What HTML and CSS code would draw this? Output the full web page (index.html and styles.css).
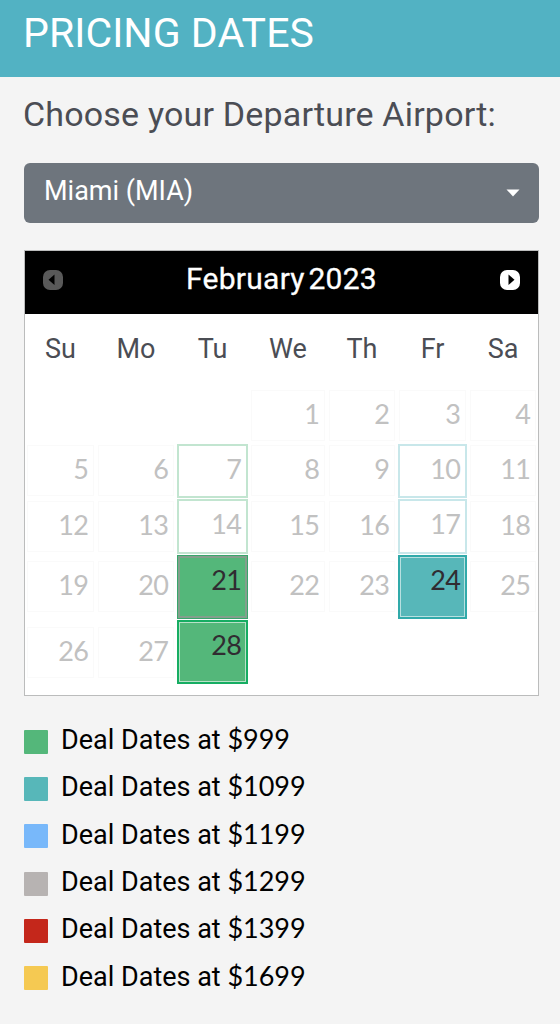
FILE: index.html
```html
<!DOCTYPE html>
<html lang="en">
<head>
    <meta charset="UTF-8">
    <meta name="viewport" content="width=device-width, initial-scale=1.0">
    <title>Pricing Dates</title>
    <link rel="stylesheet" href="styles.css">
</head>
<body>
    <header class="header"><h1>PRICING DATES</h1></header>
    <main class="content">
        <h2 class="choose">Choose your Departure Airport:</h2>
        <button class="airport">
            <span class="airport-name">Miami (MIA)</span>
            <svg width="14" height="8" viewBox="0 0 14 8"><path d="M0.5 0.5h13L7 7.5z" fill="#fff"/></svg>
        </button>

        <div class="calendar">
            <div class="cal-header">
                <svg class="arrow" width="20" height="20" viewBox="0 0 20 20"><rect width="20" height="20" rx="7" fill="#595959"/><path d="M11.5 4.5v10.5L5.5 9.8z" fill="#000"/></svg>
                <span class="month">February <span class="year">2023</span></span>
                <svg class="arrow" width="20" height="20" viewBox="0 0 20 20"><rect width="20" height="20" rx="7" fill="#fff"/><path d="M8.5 4.5v10.5L14.5 9.8z" fill="#000"/></svg>
            </div>
            <div class="week">
                <span>Su</span><span>Mo</span><span>Tu</span><span>We</span><span>Th</span><span>Fr</span><span>Sa</span>
            </div>
            <div class="days">
                <div class="day first">1</div>
                <div class="day">2</div>
                <div class="day">3</div>
                <div class="day">4</div>

                <div class="day">5</div>
                <div class="day">6</div>
                <div class="day past-green">7</div>
                <div class="day">8</div>
                <div class="day">9</div>
                <div class="day past-teal">10</div>
                <div class="day">11</div>

                <div class="day">12</div>
                <div class="day">13</div>
                <div class="day past-green">14</div>
                <div class="day">15</div>
                <div class="day">16</div>
                <div class="day past-teal">17</div>
                <div class="day">18</div>

                <div class="day">19</div>
                <div class="day">20</div>
                <div class="day deal green today">21</div>
                <div class="day">22</div>
                <div class="day">23</div>
                <div class="day deal teal">24</div>
                <div class="day">25</div>

                <div class="day">26</div>
                <div class="day">27</div>
                <div class="day deal green">28</div>
            </div>
        </div>

        <ul class="legend">
            <li><i class="box green"></i><span>Deal Dates at <b>$999</b></span></li>
            <li><i class="box teal"></i><span>Deal Dates at <b>$1099</b></span></li>
            <li><i class="box blue"></i><span>Deal Dates at <b>$1199</b></span></li>
            <li><i class="box gray"></i><span>Deal Dates at <b>$1299</b></span></li>
            <li><i class="box red"></i><span>Deal Dates at <b>$1399</b></span></li>
            <li><i class="box yellow"></i><span>Deal Dates at <b>$1699</b></span></li>
        </ul>
    </main>
</body>
</html>
```
FILE: styles.css
```css
* {
    box-sizing: border-box;
}

body {
    margin: 0;
    background: #f4f4f4;
    font-family: Roboto, "Liberation Sans", sans-serif;
    color: #4b4d54;
}

.header {
    height: 77px;
    padding: 8px 24px 0 23px;
    background: #52b2c3;
}

h1 {
    margin: 0;
    font-size: 41px;
    line-height: 50px;
    font-weight: 400;
    letter-spacing: 0.05px;
    color: #fff;
    white-space: nowrap;
}

.content {
    padding: 0 21px 0 24px;
}

.choose {
    margin: 0 0 0 -1px;
    height: 86px;
    padding-top: 15px;
    font-size: 34px;
    line-height: 44px;
    font-weight: 400;
    letter-spacing: 0.18px;
    white-space: nowrap;
}

.airport {
    display: flex;
    justify-content: space-between;
    align-items: center;
    width: 515px;
    height: 60px;
    padding: 0 19px 4px 20px;
    border: none;
    border-radius: 6px;
    background: #6e757d;
    color: #fff;
    font-family: inherit;
    font-size: 27px;
    cursor: pointer;
}

.airport svg {
    margin-top: 4px;
}

.calendar {
    width: 515px;
    height: 446px;
    margin-top: 27px;
    border: 1px solid #bbbcbc;
    background: #fff;
}

.cal-header {
    display: flex;
    justify-content: space-between;
    align-items: center;
    height: 63px;
    padding: 0 18px;
    background: #000;
    color: #fff;
}

.arrow {
    margin-top: -6px;
}

.month {
    font-size: 30px;
    line-height: 40px;
    margin-top: -8px;
    letter-spacing: 0.25px;
    -webkit-text-stroke: 0.3px #fff;
}

.year {
    margin-left: -4px;
}

.week {
    display: grid;
    grid-template-columns: 71px 80px 73px 78px 70px 71px 70px;
    height: 74px;
    padding-top: 15px;
    font-size: 27px;
    line-height: 40px;
    text-align: center;
}

.days {
    display: grid;
    grid-template-columns: 71px 80px 73px 78px 70px 71px 70px;
    grid-template-rows: 55px 55px 56px 65px 66px;
    align-items: center;
    font-family: Lato, sans-serif;
    font-size: 27px;
    line-height: 46px;
    letter-spacing: -0.8px;
}

.day {
    height: 51px;
    margin: 0 2px;
    padding-right: 5px;
    border: 1px solid #fafafa;
    text-align: right;
    color: #c1c1c1;
}

.first {
    grid-column-start: 4;
}

.past-green,
.past-teal {
    align-self: stretch;
    height: auto;
    margin: 1px 1px 0;
    line-height: 46px;
    border: 2px solid #c2e5d0;
}

.past-teal {
    border-color: #c8e7ea;
}

.deal {
    height: 64px;
    margin: 0 1px;
    line-height: 45px;
    border: 2px solid #16ad62;
    outline: 1px solid #b9e1c8;
    outline-offset: -3px;
    color: #302c31;
}

.deal.today {
    border-color: #38a66b;
    outline: 2px solid #839f8c;
    outline-offset: -3px;
}

.deal.teal {
    border-color: #31aaaa;
    outline-color: #b8e0e0;
}

.green { background: #54b77a; }
.teal { background: #57b7b9; }
.blue { background: #78b8fa; }
.gray { background: #b7b3b2; }
.red { background: #c4271b; }
.yellow { background: #f5c952; }

.legend {
    list-style: none;
    margin: 20px 0 0;
    padding: 0;
    font-size: 27px;
    color: #000;
}

.legend li {
    display: flex;
    align-items: center;
    height: 47.3px;
}

.legend span {
    margin-top: -1px;
}

.legend b {
    font-family: Lato, sans-serif;
    font-weight: 400;
}

.box {
    width: 24px;
    height: 24px;
    margin: 4px 13px 0 0;
    border-radius: 1px;
}
```
